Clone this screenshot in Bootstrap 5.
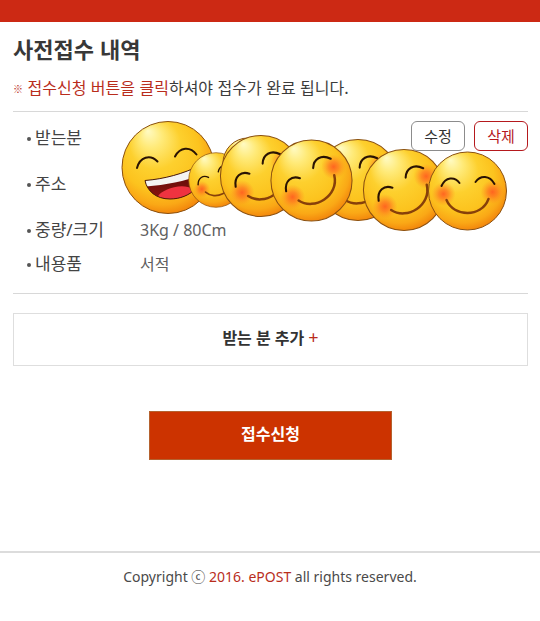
<!DOCTYPE html>
<html lang="ko">
<head>
<meta charset="utf-8">
<meta name="viewport" content="width=device-width, initial-scale=1">
<title>사전접수 내역</title>
<link href="https://cdn.jsdelivr.net/npm/bootstrap@5.3.0/dist/css/bootstrap.min.css" rel="stylesheet">
<style>
body { font-family: "Noto Sans", "Noto Sans CJK KR", sans-serif; font-size: 16px; line-height: 24px; color: #3c3c3c; background: #fff; }
.top-strip { height: 22px; background: #cc2914; }
.page-main { padding: 10px 12px 0 13px; }
.page-title { font-family: "Noto Sans CJK KR", sans-serif; font-size: 22px; line-height: 32px; font-weight: 700; color: #383838; margin-bottom: 11px; }
.notice { font-family: "Noto Sans CJK KR", sans-serif; margin-bottom: 10px; }
.notice-mark { font-size: 10px; font-weight: 700; vertical-align: 1px; }
.accent { color: #b92d1c; }
.parcel { border-top: 1px solid #d8d8d8; border-bottom: 1px solid #d8d8d8; padding: 9px 0 12px; }
.parcel-row { min-height: 34px; line-height: 34px; }
.parcel-row.tall { margin-bottom: 12px; }
.parcel dt { width: 127px; padding-left: 13px; font-weight: 400; font-size: 17px; color: #444; }
.parcel dt::before { content: ""; display: inline-block; width: 4px; height: 4px; border-radius: 50%; background: #555; margin: 0 4px 3px 1px; }
.parcel dd { color: #606060; }
.mini-actions { gap: 9px; }
.btn-mini { width: 54px; height: 30px; padding: 0; font-size: 15px; line-height: 24px; border-radius: 6px; background: #fff; border: 1px solid #8c8c8c; color: #333; }
.btn-mini.remove { border-color: #b5191d; color: #b5191d; }
.faces { left: 108px; top: 4px; pointer-events: none; }
.btn-add { margin-top: 19px; height: 53px; border: 1px solid #dedede; border-radius: 0; font-weight: 700; color: #333; background: #fff; padding: 0 0 4px; }
.plus-sign { font-size: 18px; line-height: 24px; font-weight: 400; }
.btn-apply { margin-top: 45px; width: 47%; height: 49px; border: 1px solid #b5622f; border-radius: 0; background: #cc3300; color: #fff; font-weight: 700; padding: 0 0 4px; }
.page-foot { margin-top: 91px; border-top: 2px solid #dcdcdc; padding: 12px 0; font-size: 14px; color: #4a4a4a; }
</style>
<script src="https://cdn.jsdelivr.net/npm/bootstrap@5.3.0/dist/js/bootstrap.bundle.min.js"></script>
</head>
<body>
<header class="top-strip"></header>
<main class="page-main">
  <h1 class="page-title">사전접수 내역</h1>
  <p class="notice"><span class="accent"><span class="notice-mark">※</span> 접수신청 버튼을 클릭</span>하셔야 접수가 완료 됩니다.</p>

  <section class="parcel position-relative">
    <dl class="m-0">
      <div class="parcel-row tall d-flex">
        <dt>받는분</dt><dd class="mini-actions m-0 flex-grow-1 d-flex justify-content-end align-items-start">
          <button type="button" class="btn btn-mini">수정</button>
          <button type="button" class="btn btn-mini remove">삭제</button>
        </dd>
      </div>
      <div class="parcel-row tall d-flex"><dt>주소</dt><dd class="m-0"></dd></div>
      <div class="parcel-row d-flex"><dt>중량/크기</dt><dd class="m-0">3Kg / 80Cm</dd></div>
      <div class="parcel-row d-flex"><dt>내용품</dt><dd class="m-0">서적</dd></div>
    </dl>
    <svg class="faces position-absolute" width="390" height="120" viewBox="121 115 390 120" aria-hidden="true">
      <defs>
        <radialGradient id="skin" cx=".46" cy=".42" r=".62" fx=".28" fy=".1">
          <stop offset="0" stop-color="#fffbc4"/><stop offset=".2" stop-color="#ffea78"/><stop offset=".45" stop-color="#fdd02e"/><stop offset=".7" stop-color="#fcc31e"/><stop offset=".86" stop-color="#faa816"/><stop offset="1" stop-color="#f07a08"/>
        </radialGradient>
        <radialGradient id="blush">
          <stop offset="0" stop-color="#ff5a20" stop-opacity=".9"/><stop offset=".4" stop-color="#ff6a20" stop-opacity=".65"/><stop offset="1" stop-color="#ff8a20" stop-opacity="0"/>
        </radialGradient>
        <linearGradient id="inside" x1="0" y1="0" x2="0" y2="1"><stop offset="0" stop-color="#4a0805"/><stop offset="1" stop-color="#941510"/></linearGradient>
        <circle id="ball" r="39" fill="url(#skin)" stroke="#8a5010" stroke-width="1"/>
        <g id="smile" fill="none" stroke-linecap="round">
          <circle cx="-24" cy="3" r="12" fill="url(#blush)"/>
          <circle cx="25" cy="1" r="12" fill="url(#blush)"/>
          <path d="M-26 -5C-22 -14 -13 -15 -8 -8" stroke="#2a1303" stroke-width="2"/>
          <path d="M8 -9C13 -16 22 -16 27 -7" stroke="#2a1303" stroke-width="2"/>
          <path d="M-21 9C-14 26 14 27 21 8" stroke="#87400a" stroke-width="2.400"/>
        </g>
        <clipPath id="laughClip"><path d="M145 179.500C164 178 183 173 201 164C207 183 190 198 170 198C156 198 147 190 145 179.500Z"/></clipPath>
      </defs>
      <circle cx="168" cy="166.500" r="46" fill="url(#skin)" stroke="#8a5010"/>
      <path d="M137 167C140 156 150 153 157.500 160.500M175 155.500C180 146 190 145 196.500 153.500" fill="none" stroke="#2a1303" stroke-width="2" stroke-linecap="round"/>
      <g clip-path="url(#laughClip)">
        <rect x="140" y="160" width="68" height="42" fill="url(#inside)"/>
        <ellipse cx="176" cy="195" rx="19" ry="9" fill="#ef3340" transform="rotate(-12 176 195)"/>
        <path d="M144 177L203 162V174C184 180 166 184 146 185.500Z" fill="#f5f4f2"/>
      </g>
      <path d="M145 179.500C164 178 183 173 201 164C207 183 190 198 170 198C156 198 147 190 145 179.500Z" fill="none" stroke="#4c1d06" stroke-width="1"/>
      <g transform="translate(216 179) scale(.7)"><use href="#ball"/><use href="#smile" transform="rotate(-26)"/></g>
      <circle cx="248" cy="162" r="25" fill="url(#skin)" stroke="#8a5010"/>
      <g transform="translate(261 175) scale(1.04)"><use href="#ball"/><use href="#smile" transform="rotate(-34)"/></g>
      <g transform="translate(358 179) scale(1.04)"><use href="#ball"/><use href="#smile" transform="rotate(-34)"/></g>
      <g transform="translate(311.500 179.500) scale(1.04)"><use href="#ball"/><use href="#smile" transform="rotate(-34)"/></g>
      <g transform="translate(404 189) scale(1.04)"><use href="#ball"/><use href="#smile" transform="rotate(-34)"/></g>
      <g transform="translate(467.500 190)"><use href="#ball"/><use href="#smile"/></g>
    </svg>
  </section>

  <button type="button" class="btn btn-add d-block w-100">받는 분 추가<span class="accent plus-sign ms-1">+</span></button>
  <button type="submit" class="btn btn-apply d-block mx-auto">접수신청</button>
</main>
<footer class="page-foot text-center">Copyright ⓒ <span class="accent">2016. ePOST</span> all rights reserved.</footer>
</body>
</html>
